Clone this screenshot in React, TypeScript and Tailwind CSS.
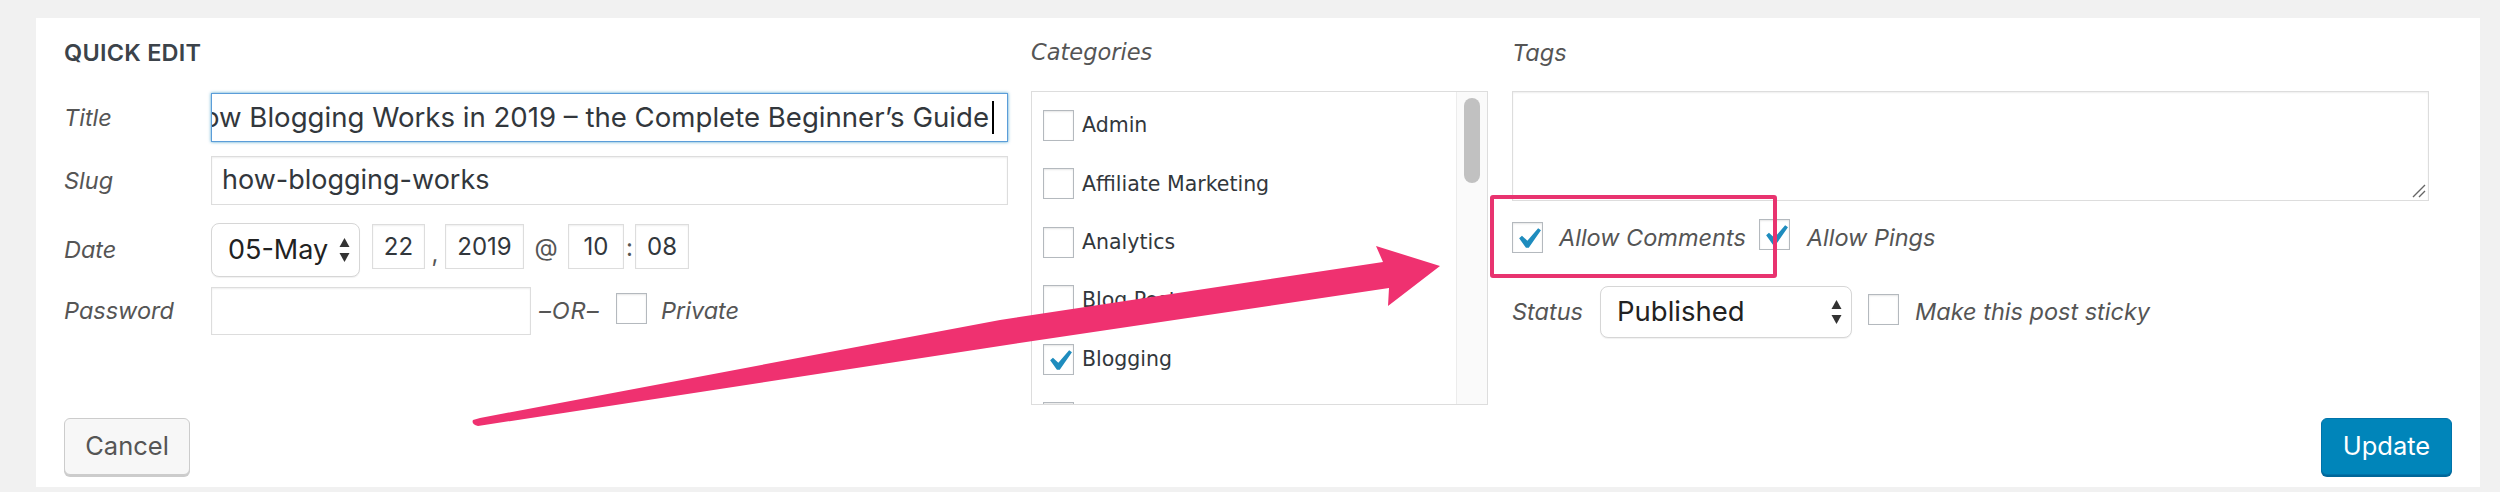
import React from 'react';

const sf = "font-['Inter',sans-serif]";
const lucida = "font-['DejaVu_Sans',sans-serif]";

function Check() {
  return (
    <svg viewBox="0 0 20 20" className="absolute -left-[6px] -top-[5px] h-[42px] w-[42px]">
      <path fill="#1e8cbe" d="M14.83 4.89l1.34.94-5.81 8.38H9.02L5.78 9.67l1.34-1.25 2.57 2.4z" />
    </svg>
  );
}

function Box({ checked = false }: { checked?: boolean }) {
  return (
    <span className="relative inline-block h-[31px] w-[31px] shrink-0 border border-[#b4b9be] bg-white shadow-[inset_0_1px_2px_rgba(0,0,0,0.1)]">
      {checked && <Check />}
    </span>
  );
}

function Arrows() {
  return (
    <svg width="11" height="26" viewBox="0 0 11 26" className="shrink-0">
      <path d="M5.5 1 L10.5 10 H0.5 Z" fill="#333" />
      <path d="M5.5 25 L10.5 16 H0.5 Z" fill="#333" />
    </svg>
  );
}

const label = 'italic text-[23.5px] text-[#555]';
const field = 'border border-[#ddd] bg-white shadow-[inset_0_1px_2px_rgba(0,0,0,0.07)] text-[#32373c]';

const categories = [
  { name: 'Admin', checked: false },
  { name: 'Affiliate Marketing', checked: false },
  { name: 'Analytics', checked: false },
  { name: 'Blog Post', checked: false },
  { name: 'Blogging', checked: true },
  { name: 'Business', checked: false },
];

export default function App() {
  return (
    <div className={`relative h-[492px] w-[2500px] overflow-hidden bg-[#f1f1f1] pb-[5px] pl-[36px] pr-[20px] pt-[18px] ${sf}`}>
      <div className="flex h-[469px] flex-col bg-white px-[28px] pt-[20px]">
        <div className="flex">
          {/* left column */}
          <div className="w-[944px]">
            <div className="flex h-[30px] items-center text-[23.5px] font-semibold tracking-[0.01em] text-[#3c434a]">QUICK EDIT</div>

            <div className="mt-[25px] flex h-[49px] items-center">
              <span className={`w-[147px] ${label}`}>Title</span>
              <div className="flex h-full flex-1 items-center justify-end overflow-hidden border border-[#5b9dd9] bg-white pr-[13px] text-[27.6px] text-[#32373c] shadow-[0_0_3px_rgba(30,140,190,0.8)]">
                <span className="whitespace-nowrap">How Blogging Works in 2019 – the Complete Beginner’s Guide</span>
                <span className="ml-[3px] h-[33px] w-[2px] shrink-0 bg-black" />
              </div>
            </div>

            <div className="mt-[14px] flex h-[49px] items-center">
              <span className={`w-[147px] ${label}`}>Slug</span>
              <div className={`flex h-full flex-1 items-center pl-[10px] text-[27px] ${field}`}>how-blogging-works</div>
            </div>

            <div className="mt-[18px] flex h-[54px] items-start">
              <span className={`flex h-full w-[147px] items-center ${label}`}>Date</span>
              <div className="flex h-[54px] w-[149px] items-center justify-between rounded-[8px] border border-[#d6d6d6] bg-white pl-[16px] pr-[9px] text-[27px] text-[#222] shadow-[0_1px_1px_rgba(0,0,0,0.06)]">
                <span>05-May</span>
                <Arrows />
              </div>
              <div className={`ml-[12px] mt-[1px] flex h-[45px] w-[53px] items-center justify-center text-[24px] ${field}`}>22</div>
              <span className="flex h-[54px] w-[20px] items-center justify-center pt-[8px] text-[24px] text-[#555]">,</span>
              <div className={`mt-[1px] flex h-[45px] w-[79px] items-center justify-center text-[24px] ${field}`}>2019</div>
              <span className="flex h-[50px] w-[44px] items-center justify-center text-[24px] text-[#555]">@</span>
              <div className={`mt-[1px] flex h-[45px] w-[56px] items-center justify-center text-[24px] ${field}`}>10</div>
              <span className="flex h-[50px] w-[11px] items-center justify-center text-[24px] text-[#555]">:</span>
              <div className={`mt-[1px] flex h-[45px] w-[54px] items-center justify-center text-[24px] ${field}`}>08</div>
            </div>

            <div className="mt-[10px] flex h-[48px] items-center">
              <span className={`w-[147px] ${label}`}>Password</span>
              <div className={`h-full w-[320px] ${field}`} />
              <span className={`ml-[8px] w-[67px] tracking-[0.04em] ${label}`}>–OR–</span>
              <span className="ml-[10px]"><Box /></span>
              <span className={`ml-[14px] ${label}`}>Private</span>
            </div>
          </div>

          {/* categories */}
          <div className="ml-[23px] w-[457px]">
            <div className={`flex h-[30px] items-center italic text-[22.5px] text-[#555] ${lucida}`}>Categories</div>
            <div className="mt-[23px] flex h-[314px] overflow-hidden border border-[#ddd] bg-white">
              <div className="flex flex-1 flex-col gap-[27.4px] pl-[11px] pt-[18px]">
                {categories.map((c) => (
                  <div key={c.name} className="flex h-[31px] shrink-0 items-center">
                    <Box checked={c.checked} />
                    <span className={`ml-[8px] text-[20.5px] text-[#32373c] ${lucida}`}>{c.name}</span>
                  </div>
                ))}
              </div>
              <div className="w-[31px] border-l border-[#ececec] bg-[#fafafa] pl-[7px] pt-[6px]">
                <div className="h-[85px] w-[16px] rounded-full bg-[#c1c1c1]" />
              </div>
            </div>
          </div>

          {/* tags */}
          <div className="ml-[24px] w-[917px]">
            <div className={`flex h-[30px] items-center ${label}`}>Tags</div>
            <div className={`relative mt-[23px] h-[110px] ${field}`}>
              <svg width="16" height="16" viewBox="0 0 16 16" className="absolute bottom-[2px] right-[2px]">
                <path d="M15 3 L3 15 M15 9 L9 15" stroke="#666" strokeWidth="1.4" />
              </svg>
            </div>

            <div className="mt-[21px] flex h-[31px] items-center">
              <Box checked />
              <span className={`ml-[16px] ${label}`}>Allow Comments</span>
              <span className="ml-[13px]"><Box checked /></span>
              <span className={`ml-[17px] ${label}`}>Allow Pings</span>
            </div>

            <div className="mt-[33px] flex h-[52px] items-center">
              <span className={`w-[88px] ${label}`}>Status</span>
              <div className="flex h-[52px] w-[252px] items-center justify-between rounded-[8px] border border-[#d6d6d6] bg-white pl-[16px] pr-[9px] text-[27.5px] text-[#222] shadow-[0_1px_1px_rgba(0,0,0,0.06)]">
                <span>Published</span>
                <Arrows />
              </div>
              <span className="ml-[16px]"><Box /></span>
              <span className={`ml-[16px] ${label}`}>Make this post sticky</span>
            </div>
          </div>
        </div>

        <div className="mt-auto flex justify-between pb-[12px]">
          <button className="h-[57px] w-[126px] rounded-[6px] border border-[#ccc] bg-[#f7f7f7] text-[25.5px] text-[#555] shadow-[0_2px_0_#ccc]">Cancel</button>
          <button className="h-[57px] w-[131px] rounded-[6px] border border-[#0073aa] bg-[#0085ba] text-[25.5px] text-white shadow-[0_2px_0_#006799]">Update</button>
        </div>
      </div>

      {/* annotation overlays */}
      <div className="pointer-events-none absolute left-[1490px] top-[195px] h-[83px] w-[287px] rounded-[3px] border-[4px] border-[#e8336f]" />
      <svg className="pointer-events-none absolute left-0 top-0" width="2500" height="492" viewBox="0 0 2500 492">
        <path
          d="M480 418 L1000 320 L1383 262 L1376 246 L1440 266 L1388 306 L1389 288 L1000 346 L478 426 Q471 424 473 420 Z"
          fill="#ef3170"
        />
      </svg>
    </div>
  );
}
